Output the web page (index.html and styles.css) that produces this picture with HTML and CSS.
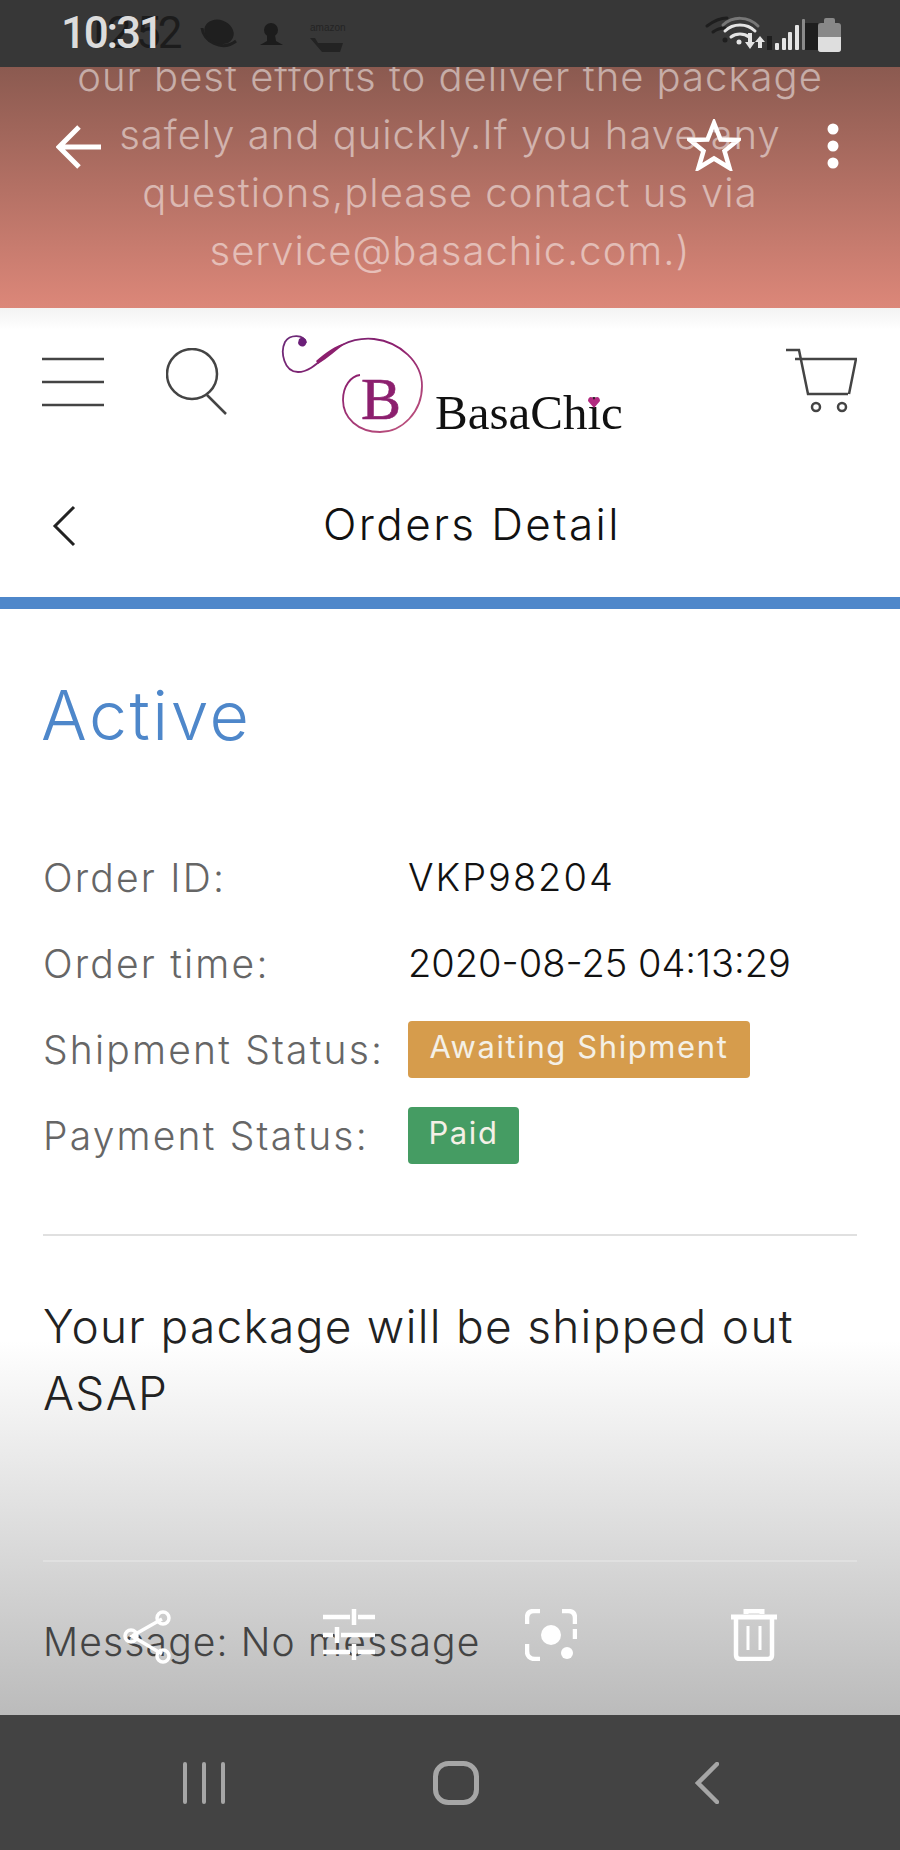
FILE: index.html
```html
<!DOCTYPE html>
<html lang="en">
<head>
    <meta charset="UTF-8">
    <meta name="viewport" content="width=device-width, initial-scale=1.0">
    <title>Orders Detail - BasaChic</title>
    <link rel="stylesheet" href="styles.css">
</head>
<body>
    <div class="phone">
        <!-- Status bar -->
        <div class="status-bar">
            <div class="status-left">
                <span class="ghost-time">12:52</span>
                <span class="time">10:31</span>
                <svg class="ghost-icons" width="150" height="50" viewBox="0 0 150 50">
                    <ellipse cx="19" cy="22" rx="15" ry="12" fill="#1f1f1f" transform="rotate(20 19 22)"/>
                    <path d="M2 18c1 13 20 24 34 13" fill="none" stroke="#1f1f1f" stroke-width="3"/>
                    <circle cx="71" cy="20" r="7" fill="#1c1c1c"/>
                    <path d="M67 25h8l1 6 7 4H60l7-4z" fill="#1c1c1c"/>
                    <text class="ghost-brand" x="110" y="21">amazon</text>
                    <path d="M110 28h5l3 5h25l-3 9h-18z" fill="#232323"/>
                </svg>
            </div>
            <svg class="status-right" width="140" height="50" viewBox="0 0 140 50">
                <g fill="none" stroke-linecap="round">
                    <path d="M6 18c8-6 14-8 20-8M12 24c4-3 8-4 12-4" stroke="#1e1e1e" stroke-width="3"/>
                    <path d="M22 17c10-9 25-9 35 1" stroke="#777" stroke-width="3"/>
                    <path d="M24 23c8-8 22-8 30 0M30 29c5-4 13-4 18 0" stroke="#e4e4e4" stroke-width="3"/>
                </g>
                <circle cx="24" cy="32" r="2.500" fill="#1e1e1e"/>
                <circle cx="38" cy="34" r="2.500" fill="#e4e4e4"/>
                <path d="M47 25h4v9h3l-5 7-5-7h3zM57 40h4v-6h3l-5-6-5 6h3z" fill="#e4e4e4"/>
                <rect x="66" y="28" width="5" height="14" fill="#1e1e1e"/>
                <rect x="74" y="35" width="4" height="7" rx="1" fill="#e4e4e4"/>
                <rect x="81" y="30" width="4" height="12" rx="1" fill="#e4e4e4"/>
                <rect x="87" y="24" width="4" height="18" rx="1" fill="#e4e4e4"/>
                <rect x="94" y="17" width="4" height="25" rx="1" fill="#e4e4e4"/>
                <rect x="101" y="11" width="3" height="31" rx="1" fill="#8a8a8a"/>
                <rect x="104" y="15" width="13" height="27" fill="#1e1e1e"/>
            </svg>
            <div class="battery">
                <span class="battery-nub"></span>
                <div class="battery-body"><span class="battery-fill"></span></div>
            </div>
        </div>

        <!-- Banner, scrolled under the status bar -->
        <div class="banner">
            <div class="banner-text">
                our best efforts to deliver the package<br>
                safely and quickly.If you have any<br>
                questions,please contact us via<br>
                service@basachic.com.)
            </div>
        </div>

        <!-- Site header -->
        <div class="site-header">
            <svg class="menu-icon" width="62" height="50" viewBox="0 0 62 50">
                <path d="M0 2h62M0 25h62M0 48h62" stroke="#444" stroke-width="2.500"/>
            </svg>
            <svg class="search-icon" width="62" height="68" viewBox="0 0 62 68">
                <ellipse cx="26" cy="26" rx="25" ry="25" fill="none" stroke="#444" stroke-width="2.500"/>
                <path d="M41 47l19 19" stroke="#444" stroke-width="2.500"/>
            </svg>
            <div class="logo">
                <svg class="logo-mark" width="145" height="102" viewBox="0 0 145 102">
                    <defs>
                        <linearGradient id="swirl" x1="0" y1="0" x2="1" y2="1">
                            <stop offset="0" stop-color="#6b2a78"/>
                            <stop offset=".45" stop-color="#8c1f6e"/>
                            <stop offset="1" stop-color="#c2587f"/>
                        </linearGradient>
                    </defs>
                    <path d="M26 9C24 0 10 0 5 8 0 18 4 38 18 38 34 38 46 18 62 11 72 6 84 4 94 5c26 3 48 23 48 47 0 26-20 46-42 46-22 0-37-14-37-32 0-14 8-24 17-25" fill="none" stroke="url(#swirl)" stroke-width="1.800"/>
                    <path d="M19 5c4-3 9 0 7 5-2 4-7 3-8-1z" fill="#6b1f78"/>
                    <path d="M36 27C46 18 56 11 66 9 56 16 48 24 38 30z" fill="#8c1f6e"/>
                    <text class="logo-b" x="101" y="85" text-anchor="middle">B</text>
                </svg>
                <span class="logo-text">BasaChic<svg class="logo-heart" width="12" height="11" viewBox="0 0 12 11"><path d="M6 11L0 4c0-5 5-5 6-1 1-4 6-4 6 1z" fill="#b22a80"/></svg></span>
            </div>
            <svg class="cart-icon" width="72" height="66" viewBox="0 0 72 66">
                <path d="M1 2h13l9 44h40M10 11h61l-7 35" fill="none" stroke="#444" stroke-width="2.500"/>
                <circle cx="31" cy="59" r="4" fill="none" stroke="#444" stroke-width="2.500"/>
                <circle cx="57" cy="59" r="4" fill="none" stroke="#444" stroke-width="2.500"/>
            </svg>
        </div>

        <!-- Page title -->
        <div class="title-row">
            <svg class="title-back" width="24" height="42" viewBox="0 0 24 42">
                <path d="M22 2L3 21l19 19" fill="none" stroke="#222" stroke-width="3"/>
            </svg>
            <div class="title">Orders Detail</div>
        </div>
        <div class="blue-bar"></div>

        <!-- Order info -->
        <div class="content">
            <div class="order-state">Active</div>
            <div class="info-row">
                <div class="info-label">Order ID:</div>
                <div class="info-value info-id">VKP98204</div>
            </div>
            <div class="info-row">
                <div class="info-label">Order time:</div>
                <div class="info-value">2020-08-25 04:13:29</div>
            </div>
            <div class="info-row">
                <div class="info-label">Shipment Status:</div>
                <div class="badge badge-orange">Awaiting Shipment</div>
            </div>
            <div class="info-row">
                <div class="info-label">Payment Status:</div>
                <div class="badge badge-green">Paid</div>
            </div>
            <div class="divider divider-first"></div>
            <div class="notice">Your package will be shipped out ASAP</div>
            <div class="divider divider-second"></div>
            <div class="message">Message: No message</div>
        </div>

        <!-- Gallery viewer controls lying over the page -->
        <div class="fade"></div>
        <svg class="viewer-back" width="46" height="44" viewBox="0 0 46 44">
            <path d="M45 22H4M23 2L3 22l20 20" fill="none" stroke="#fff" stroke-width="5"/>
        </svg>
        <svg class="viewer-star" width="54" height="52" viewBox="0 0 54 52">
            <path d="M27 4l6.500 16.500L51 21 37.500 32l5 17L27 39.500 11.500 49l5-17L3 21l17.500-.5z" fill="none" stroke="#fff" stroke-width="4.500"/>
        </svg>
        <svg class="viewer-more" width="12" height="46" viewBox="0 0 12 46">
            <circle cx="6" cy="6" r="5.500" fill="#fff"/>
            <circle cx="6" cy="23" r="5.500" fill="#fff"/>
            <circle cx="6" cy="40" r="5.500" fill="#fff"/>
        </svg>
        <div class="viewer-tools">
            <svg width="52" height="56" viewBox="0 0 52 56">
                <path d="M41 10L11 27l30 18" fill="none" stroke="#fff" stroke-width="3.500"/>
                <circle cx="42" cy="9" r="6" fill="none" stroke="#fff" stroke-width="3.500"/>
                <circle cx="10" cy="27" r="6" fill="none" stroke="#fff" stroke-width="3.500"/>
                <circle cx="42" cy="47" r="6" fill="none" stroke="#fff" stroke-width="3.500"/>
            </svg>
            <svg width="52" height="52" viewBox="0 0 52 52">
                <path d="M0 8h27M35 8h17M0 26h10M18 26h34M0 43h27M35 43h17M31 0v16M14 18v16M31 35v16" fill="none" stroke="#fff" stroke-width="4.500"/>
            </svg>
            <svg width="52" height="52" viewBox="0 0 52 52">
                <path d="M15 2H9C4 2 2 5 2 9v6M37 2h6c5 0 7 3 7 7v6M2 35v7c0 5 3 8 8 8h5M50 20v10" fill="none" stroke="#fff" stroke-width="4.500"/>
                <circle cx="26" cy="26" r="10" fill="#fff"/>
                <circle cx="42" cy="44" r="6" fill="#fff"/>
            </svg>
            <svg class="tool-trash" width="46" height="52" viewBox="0 0 46 52">
                <path d="M0 8h46M15 5V2h16v3" fill="none" stroke="#fff" stroke-width="5"/>
                <path d="M5 9v37c0 3 2 4 4 4h28c2 0 4-1 4-4V9" fill="none" stroke="#fff" stroke-width="4.500"/>
                <path d="M17 17v24M29 17v24" fill="none" stroke="#fff" stroke-width="3"/>
            </svg>
        </div>

        <!-- Android navigation -->
        <div class="nav-bar">
            <svg width="42" height="42" viewBox="0 0 42 42">
                <path d="M2 2v38M21 2v38M40 2v38" stroke="#a6a6a6" stroke-width="4" stroke-linecap="round"/>
            </svg>
            <svg class="nav-home" width="46" height="44" viewBox="0 0 46 44">
                <rect x="2.500" y="2.500" width="41" height="39" rx="13" fill="none" stroke="#a6a6a6" stroke-width="5"/>
            </svg>
            <svg width="24" height="42" viewBox="0 0 24 42">
                <path d="M22 2L3 21l19 19" fill="none" stroke="#a6a6a6" stroke-width="4.500" stroke-linecap="round"/>
            </svg>
        </div>
    </div>
</body>
</html>
```

FILE: styles.css
```css
/* Page */
body {
    margin: 0;
    font-family: Inter, "Liberation Sans", sans-serif;
    font-weight: 300;
    background-color: #fff;
}

.phone {
    position: relative;
    width: 900px;
    height: 1850px;
    overflow: hidden;
    display: flex;
    flex-direction: column;
}

/* Status bar */
.status-bar {
    position: relative;
    z-index: 2;
    height: 67px;
    flex-shrink: 0;
    background-color: #373737;
    display: flex;
    justify-content: space-between;
    padding: 0 59px 0 61px;
    box-sizing: border-box;
}

.status-left {
    position: relative;
    display: flex;
    align-items: center;
    padding-bottom: 1px;
}

.time {
    position: relative;
    font-family: Roboto, sans-serif;
    font-weight: 500;
    font-size: 44px;
    letter-spacing: -2.2px;
    color: #dcdcdc;
}

.ghost-time {
    position: absolute;
    left: 24px;
    top: 7px;
    font-family: Roboto, sans-serif;
    font-weight: 400;
    font-size: 44px;
    letter-spacing: -3px;
    color: #1c1c1c;
}

.ghost-icons {
    position: absolute;
    left: 139px;
    top: 10px;
}

.ghost-brand {
    font-family: "Liberation Sans", sans-serif;
    font-size: 10px;
    fill: #242424;
}

.status-right {
    position: absolute;
    right: 59px;
    top: 8px;
}

.battery {
    position: absolute;
    right: 59px;
    top: 18px;
    width: 23px;
    display: flex;
    flex-direction: column;
    align-items: center;
}

.battery-nub {
    width: 11px;
    height: 5px;
    background-color: #888;
    border-radius: 2px 2px 0 0;
}

.battery-body {
    width: 23px;
    height: 29px;
    background-color: #888;
    border-radius: 3px;
    overflow: hidden;
}

.battery-fill {
    display: block;
    height: 15px;
    margin-top: 14px;
    background-color: #dedede;
}

/* Banner */
.banner {
    height: 241px;
    flex-shrink: 0;
    overflow: hidden;
    background: linear-gradient(180deg, #8b5a50, #dc8779);
}

.banner-text {
    margin-top: -19px;
    color: rgba(255, 255, 255, 0.5);
    font-size: 40px;
    line-height: 58px;
    text-align: center;
    white-space: nowrap;
    letter-spacing: 1px;
}

/* Site header */
.site-header {
    height: 142px;
    flex-shrink: 0;
    display: flex;
    align-items: flex-start;
    box-sizing: border-box;
    padding-left: 42px;
    background: linear-gradient(180deg, #f3f3f3, #fff 22px);
}

.menu-icon {
    margin-top: 49px;
}

.search-icon {
    margin: 40px 0 0 62px;
}

.logo {
    display: flex;
    align-items: flex-end;
    margin: 26px 0 0 52px;
}

.logo-b {
    font-family: "Liberation Serif", serif;
    font-size: 60px;
    font-weight: 400;
    fill: #8c1f6e;
    stroke: #8c1f6e;
    stroke-width: 0.6;
}

.logo-text {
    position: relative;
    font-family: "Liberation Serif", serif;
    font-size: 49px;
    font-weight: 400;
    color: #111;
    line-height: 1;
    margin: 0 0 -1px 10px;
}

.logo-heart {
    position: absolute;
    left: 153px;
    top: 9px;
}

.cart-icon {
    position: absolute;
    left: 785px;
    top: 348px;
}

/* Title row */
.title-row {
    position: relative;
    height: 147px;
    flex-shrink: 0;
    display: flex;
    align-items: center;
    justify-content: center;
}

.title-back {
    position: absolute;
    left: 52px;
    top: 55px;
}

.title {
    font-size: 44px;
    color: #111;
    letter-spacing: 2.4px;
    margin-left: 44px;
}

.blue-bar {
    height: 12px;
    flex-shrink: 0;
    background-color: #4e87ca;
}

/* Order info */
.content {
    position: relative;
    z-index: 1;
    padding: 0 43px;
}

.order-state {
    font-size: 68px;
    color: #4e87ca;
    line-height: 72px;
    margin: 70px 0 83px -2px;
    letter-spacing: 2.5px;
}

.info-row {
    display: flex;
    align-items: center;
    height: 86px;
}

.info-label {
    width: 365px;
    flex-shrink: 0;
    font-size: 39px;
    color: #666;
    letter-spacing: 2.2px;
    white-space: nowrap;
}

.info-value {
    font-size: 38px;
    color: #111;
}

.info-id {
    letter-spacing: 2px;
}

.badge {
    height: 57px;
    line-height: 52px;
    box-sizing: border-box;
    border-radius: 4px;
    color: #f4f0e6;
    font-size: 31px;
    font-weight: 400;
    letter-spacing: 1.6px;
    text-align: center;
}

.badge-orange {
    width: 342px;
    background-color: #d69c4c;
}

.badge-green {
    width: 111px;
    background-color: #459c63;
}

.divider {
    height: 2px;
    background-color: #e0e0e0;
}

.divider-first {
    margin-top: 56px;
}

.notice {
    font-size: 46px;
    line-height: 67px;
    color: #222;
    margin-top: 57px;
    letter-spacing: 1.3px;
    width: 800px;
}

.divider-second {
    margin-top: 133px;
}

.message {
    font-size: 39px;
    color: #444;
    margin-top: 58px;
    line-height: 44px;
    letter-spacing: 1.15px;
}

/* Gallery viewer controls */
.fade {
    position: absolute;
    left: 0;
    right: 0;
    top: 1340px;
    height: 375px;
    background: linear-gradient(180deg, rgba(185, 185, 185, 0), #bbb);
}

.viewer-back {
    position: absolute;
    z-index: 1;
    left: 56px;
    top: 125px;
}

.viewer-star {
    position: absolute;
    z-index: 1;
    left: 687px;
    top: 119px;
}

.viewer-more {
    position: absolute;
    z-index: 1;
    left: 827px;
    top: 123px;
}

.viewer-tools {
    position: absolute;
    z-index: 2;
    left: 121px;
    top: 1609px;
    display: flex;
    gap: 150px;
    align-items: flex-start;
}

.tool-trash {
    margin-left: 4px;
}

/* Navigation bar */
.nav-bar {
    position: absolute;
    left: 0;
    right: 0;
    top: 1715px;
    height: 135px;
    background-color: #434343;
    display: flex;
    align-items: center;
    box-sizing: border-box;
    padding: 0 181px 0 183px;
    justify-content: space-between;
}

.nav-home {
    margin-right: 8px;
}
```
